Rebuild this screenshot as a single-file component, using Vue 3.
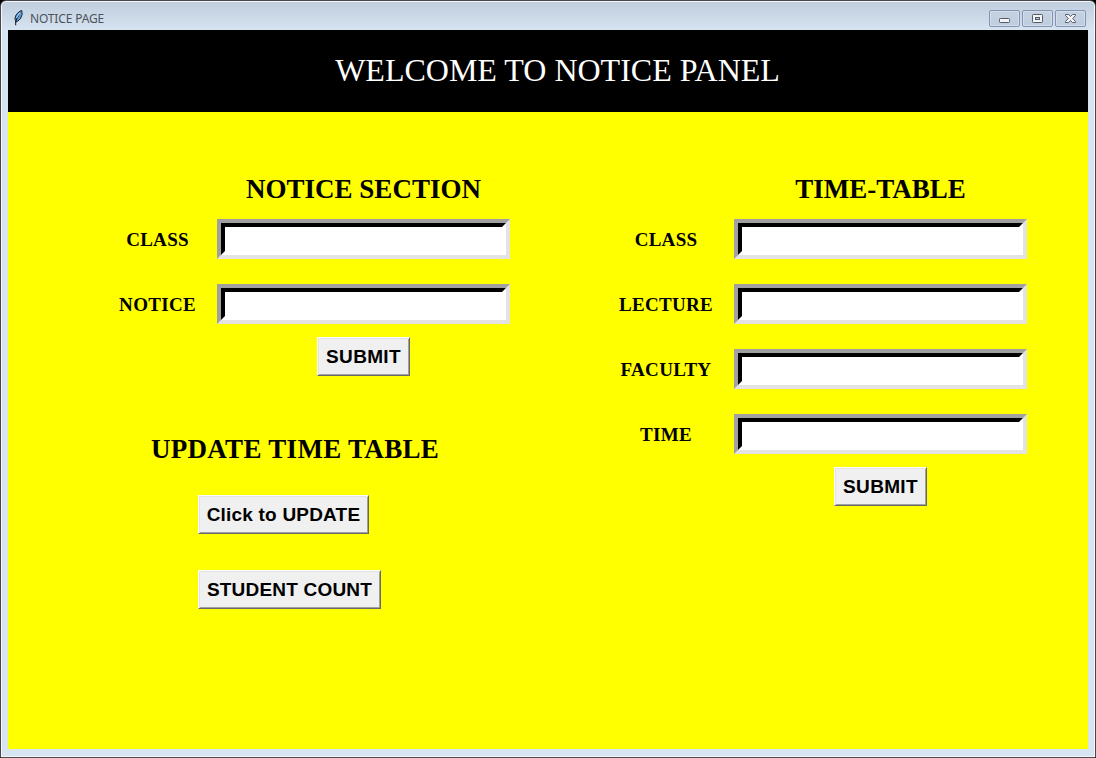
<script setup>
const noticeFields = ['CLASS', 'NOTICE']
const timetableFields = ['CLASS', 'LECTURE', 'FACULTY', 'TIME']
</script>

<template>
  <div class="window">
    <header class="titlebar">
      <svg class="feather" width="12" height="17" viewBox="0 0 12 17">
        <path d="M2.9 13V11.5L1.8 10 3 6 5.8 3 8.7 1.4 9.2 5.5 7.4 9.8 4.6 12.2z" fill="#5a9ee0" stroke="#1b222c" stroke-width="1" />
        <path d="M2.7 16.3V12L6.2 5.5" fill="none" stroke="#101318" stroke-width="1" />
        <path d="M3.6 9L6.6 4" stroke="#b9dcf7" stroke-width="1" />
      </svg>
      <span class="caption">NOTICE PAGE</span>
      <div class="controls">
        <span class="control">
          <svg width="29" height="15" viewBox="0 0 29 15"><rect x="9.5" y="7.5" width="10" height="4" rx=".8" fill="#f4f4f4" stroke="#555b6b" /></svg>
        </span>
        <span class="control">
          <svg width="29" height="15" viewBox="0 0 29 15"><rect x="9.5" y="3.5" width="10" height="8" rx=".8" fill="#f4f4f4" stroke="#555b6b" /><rect x="12.5" y="6.5" width="4" height="2" fill="#b8c8dc" stroke="#555b6b" /></svg>
        </span>
        <span class="control">
          <svg width="29" height="15" viewBox="0 0 29 15"><path d="M9.5 3.5H12.5L14.5 5.5 16.5 3.5H19.5V4.5L16.7 7.5 19.5 10.5V11.5H16.5L14.5 9.5 12.5 11.5H9.5V10.5L12.3 7.5 9.5 4.5z" fill="#f4f4f4" stroke="#555b6b" /></svg>
        </span>
      </div>
    </header>

    <main class="client">
      <h1 class="banner"><span>WELCOME TO NOTICE PANEL</span></h1>
      <div class="panels">
        <div class="left">
          <section class="form notice">
            <h2>NOTICE SECTION</h2>
            <template v-for="name in noticeFields" :key="name">
              <label>{{ name }}</label>
              <div class="entry"><input type="text" :aria-label="name" /></div>
            </template>
            <button class="submit">SUBMIT</button>
          </section>
          <section class="update">
            <h2>UPDATE TIME TABLE</h2>
            <button class="click">Click to UPDATE</button>
            <button class="count">STUDENT COUNT</button>
          </section>
        </div>
        <section class="form timetable">
          <h2>TIME-TABLE</h2>
          <template v-for="name in timetableFields" :key="name">
            <label>{{ name }}</label>
            <div class="entry"><input type="text" :aria-label="name" /></div>
          </template>
          <button class="submit">SUBMIT</button>
        </section>
      </div>
    </main>
  </div>
</template>

<style>
body { background: #000; overflow: hidden; }
</style>

<style scoped>
* { box-sizing: border-box; }
.window {
  width: 1096px;
  height: 758px;
  border: 1px solid #4b4749;
  border-radius: 6px 6px 0 0;
  background: linear-gradient(#bfcddd 0, #d7e4f1 30px, #d7e4f1 100%);
  box-shadow: inset 0 0 0 1px #f4f8fc;
  display: flex;
  flex-direction: column;
  padding: 0 7px 8px;
}
.titlebar { height: 29px; flex: none; display: flex; align-items: flex-start; }
.feather { margin: 8px 0 0 5px; }
.caption {
  margin: 10px 0 0 5px;
  font: 12px/15px "Noto Sans", "Open Sans", sans-serif;
  letter-spacing: -0.15px;
  color: #4c535b;
  white-space: nowrap;
}
.controls { display: flex; gap: 2px; margin: 9px 2px 0 auto; }
.control {
  width: 31px;
  height: 17px;
  border: 1px solid #8493b3;
  border-radius: 2px;
  background: linear-gradient(#c5d2e1, #becddf);
  box-shadow: inset 0 0 0 1px #d3deeb;
}
.control svg { display: block; }
.client { flex: 1; background: #ff0; color: #000; }
.banner {
  height: 82px;
  margin: 0;
  padding: 0 0 2px 19px;
  display: flex;
  align-items: center;
  justify-content: center;
  background: #000;
  color: #fff;
  font: 32px/36px "Liberation Serif", "Times New Roman", serif;
  white-space: nowrap;
}
.panels { display: grid; grid-template-columns: 540px 540px; padding-top: 57px; }
.form { display: grid; grid-template-rows: 50px; grid-auto-rows: 65px; align-items: start; }
.notice { grid-template-columns: 90px 119px 293px; height: 230px; }
.timetable { grid-template-columns: 50px 136px 293px; }
h2 {
  margin: 0;
  font: bold 27px/40px "Liberation Serif", "Times New Roman", serif;
  text-align: center;
  white-space: nowrap;
}
.form h2, .entry, .submit { grid-column: 3; }
label {
  grid-column: 2;
  text-align: center;
  font: bold 19px/42px "Liberation Serif", "Times New Roman", serif;
  letter-spacing: 0.3px;
}
.entry {
  height: 40px;
  border: 4px solid;
  border-color: #a0a0a0 #e3e3e3 #e3e3e3 #a0a0a0;
}
.entry input {
  display: block;
  width: 100%;
  height: 100%;
  padding: 0 4px;
  border: 4px solid;
  border-color: #000 #fff #fff #000;
  border-radius: 0;
  outline: 0;
  background: #fff;
  font: 20px "Liberation Sans", Arial, sans-serif;
}
button {
  display: block;
  height: 39px;
  padding: 0;
  border: 1px solid;
  border-color: #fff #696969 #696969 #fff;
  border-radius: 0;
  background: #f0f0f0;
  box-shadow: inset 1px 1px #e3e3e3, inset -1px -1px #a0a0a0;
  color: #000;
  font: bold 19px/36px "Liberation Sans", Arial, sans-serif;
  letter-spacing: 0.2px;
  white-space: nowrap;
}
.submit { width: 93px; justify-self: center; margin-top: -12px; letter-spacing: 0.35px; }
.update { margin-top: 30px; padding-left: 190px; }
.update h2 { width: 290px; margin-left: -48px; letter-spacing: 0.3px; }
.click { width: 171px; margin-top: 26px; }
.count { width: 183px; margin-top: 36px; }
</style>
